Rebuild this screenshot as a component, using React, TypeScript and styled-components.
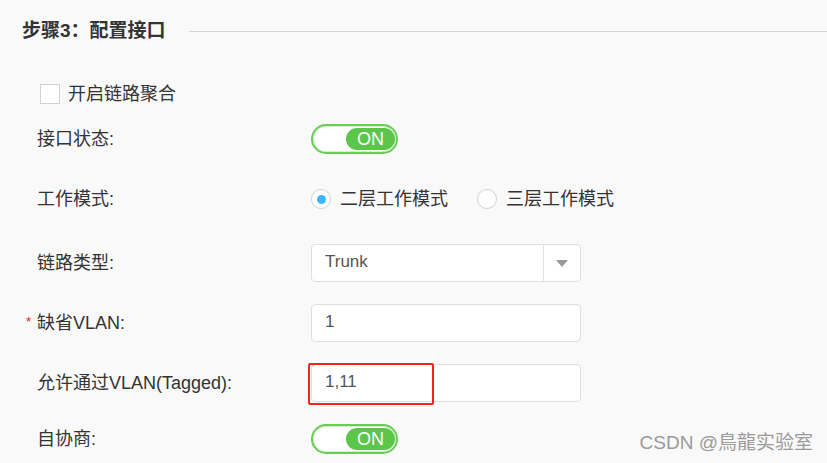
import styled, { createGlobalStyle } from "styled-components";

const Global = createGlobalStyle`
  html, body {
    margin: 0;
    padding: 0;
    background: #f9f9f9;
  }
  body {
    font-family: "Liberation Sans", "Noto Sans CJK SC", sans-serif;
    color: #333;
    overflow: hidden;
  }
  * {
    box-sizing: border-box;
  }
`;

const Page = styled.div`
  position: relative;
  width: 827px;
  height: 463px;
  overflow: hidden;
`;

const Header = styled.div`
  display: flex;
  align-items: center;
  height: 62px;
  padding-left: 22px;
`;

const Title = styled.h3`
  margin: 0;
  font-size: 19px;
  line-height: 20px;
  font-weight: bold;
  color: #333;
  white-space: nowrap;
`;

const Rule = styled.div`
  flex: 1;
  height: 1px;
  margin-left: 23px;
  background: #d4d4d4;
`;

const CheckRow = styled.label`
  display: flex;
  align-items: center;
  margin: 22px 0 0 40px;
  height: 20px;
  font-size: 18px;
  line-height: 20px;
`;

const CheckBox = styled.span`
  width: 20px;
  height: 20px;
  border: 1px solid #d2d2d2;
  background: #fff;
  margin-right: 8px;
`;

const Form = styled.div`
  display: flex;
  flex-direction: column;
  margin-top: 20px;
`;

const Row = styled.div<{ $gap: number }>`
  display: flex;
  align-items: center;
  margin-top: ${(p) => p.$gap}px;
`;

const Label = styled.div<{ $required?: boolean }>`
  position: relative;
  width: 311px;
  padding-left: 37px;
  font-size: 18px;
  line-height: 20px;
  color: #333;
  white-space: nowrap;

  &::before {
    content: ${(p) => (p.$required ? '"*"' : '""')};
    position: absolute;
    left: 26px;
    top: 2px;
    color: #e02020;
    font-size: 13px;
    line-height: 13px;
  }
`;

const Toggle = styled.div`
  width: 87px;
  height: 30px;
  border: 2px solid #68cc55;
  border-radius: 15px;
  background: #fff;
  display: flex;
  justify-content: flex-end;
  align-items: center;
  padding: 0 1px;
  box-shadow: inset 0 0 0 1px #d3efcc;
`;

const Knob = styled.div`
  width: 49px;
  height: 22px;
  border-radius: 11px;
  background: #5cc64a;
  color: #fff;
  font-size: 18px;
  display: flex;
  align-items: center;
  justify-content: center;
`;

const RadioGroup = styled.div`
  display: flex;
  align-items: center;
  gap: 29px;
  height: 20px;
  font-size: 18px;
  line-height: 20px;
`;

const RadioItem = styled.label`
  display: flex;
  align-items: center;
  gap: 9px;
`;

const RadioCircle = styled.span<{ $checked?: boolean }>`
  width: 20px;
  height: 20px;
  border-radius: 50%;
  border: 1px solid #d0d0d0;
  background: #fff;
  display: flex;
  align-items: center;
  justify-content: center;

  &::after {
    content: "";
    width: 9px;
    height: 9px;
    border-radius: 50%;
    background: ${(p) => (p.$checked ? "#3fb6f5" : "transparent")};
  }
`;

const Field = styled.div`
  position: relative;
  width: 270px;
  height: 38px;
  border: 1px solid #dedede;
  border-radius: 4px;
  background: #fff;
  display: flex;
  align-items: center;
  font-size: 17px;
  color: #555;
`;

const FieldText = styled.span`
  flex: 1;
  padding-left: 13px;
  padding-bottom: 3px;
`;

const Caret = styled.div`
  width: 37px;
  height: 100%;
  border-left: 1px solid #e2e2e2;
  display: flex;
  align-items: center;
  justify-content: center;
`;

const Highlight = styled.div`
  position: absolute;
  left: -4px;
  top: -2px;
  width: 126px;
  height: 42px;
  border: 2px solid #f22320;
  border-radius: 2px;
`;

const Watermark = styled.div`
  position: absolute;
  right: 14px;
  bottom: 9px;
  font-size: 19px;
  color: #9a9a9a;
`;

const Switch = () => (
  <Toggle>
    <Knob>ON</Knob>
  </Toggle>
);

export default function App() {
  return (
    <Page>
      <Global />
      <Header>
        <Title>步骤3：配置接口</Title>
        <Rule />
      </Header>
      <CheckRow>
        <CheckBox />
        开启链路聚合
      </CheckRow>
      <Form>
        <Row $gap={0}>
          <Label>接口状态:</Label>
          <Switch />
        </Row>
        <Row $gap={35}>
          <Label>工作模式:</Label>
          <RadioGroup>
            <RadioItem>
              <RadioCircle $checked />
              二层工作模式
            </RadioItem>
            <RadioItem>
              <RadioCircle />
              三层工作模式
            </RadioItem>
          </RadioGroup>
        </Row>
        <Row $gap={35}>
          <Label>链路类型:</Label>
          <Field>
            <FieldText>Trunk</FieldText>
            <Caret>
              <svg width="12" height="7" viewBox="0 0 12 7">
                <path d="M0 0h12L6 7z" fill="#999" />
              </svg>
            </Caret>
          </Field>
        </Row>
        <Row $gap={22}>
          <Label $required>缺省VLAN:</Label>
          <Field>
            <FieldText>1</FieldText>
          </Field>
        </Row>
        <Row $gap={22}>
          <Label>允许通过VLAN(Tagged):</Label>
          <Field>
            <FieldText>1,11</FieldText>
            <Highlight />
          </Field>
        </Row>
        <Row $gap={22}>
          <Label>自协商:</Label>
          <Switch />
        </Row>
      </Form>
      <Watermark>CSDN @鳥龍实验室</Watermark>
    </Page>
  );
}
